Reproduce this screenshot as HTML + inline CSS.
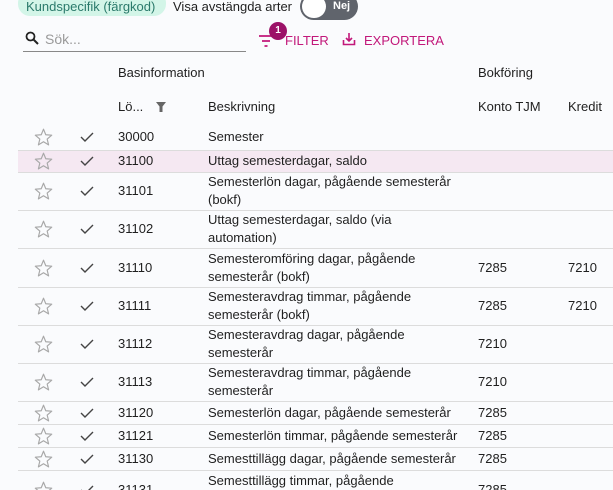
<!DOCTYPE html>
<html><head><meta charset="utf-8"><style>
*{margin:0;padding:0;box-sizing:border-box}
html,body{width:613px;height:490px;overflow:hidden}
body{background:#fafbfd;font-family:"Liberation Sans",sans-serif;font-size:13px;color:#1f1f1f;position:relative}
.a{position:absolute;white-space:nowrap}
.row{position:absolute;left:18px;right:0;border-bottom:1px solid #dcdcdc}
.st{position:absolute;left:34px}
.ck{position:absolute;left:79px}
.t{position:absolute;line-height:18px}
</style></head><body>
<div class="a" style="left:18px;top:-9px;width:148px;height:25px;border-radius:12px;background:#d3f5e8;color:#2b7a6b;font-size:13px;padding:8px 0 0 8px;line-height:15px">Kundspecifik (färgkod)</div>
<div class="a" style="left:173px;top:-1px;font-size:13px">Visa avstängda arter</div>
<div class="a" style="left:300px;top:-7px;width:58px;height:27px;border-radius:14px;background:#60646c"></div>
<div class="a" style="left:302px;top:-5px;width:24px;height:23px;border-radius:12px;background:#fff"></div>
<div class="a" style="left:333px;top:0px;color:#fff;font-size:11px;font-weight:bold">Nej</div>
<svg class="a" style="left:25px;top:31px" width="14" height="14" viewBox="0 0 14 14"><circle cx="5.5" cy="5.5" r="4" fill="none" stroke="#222" stroke-width="1.8"/><path d="M8.5 8.5L13 13" stroke="#222" stroke-width="2"/></svg>
<div class="a" style="left:45px;top:31px;color:#9a9a9a;font-size:14px">Sök...</div>
<div class="a" style="left:23px;top:51px;width:223px;height:1px;background:#888"></div>
<svg class="a" style="left:258px;top:34px" width="16" height="14" viewBox="0 0 16 14"><path d="M1 2H15M4 7H12M6.5 12H9.5" stroke="#c2187a" stroke-width="1.8"/></svg>
<div class="a" style="left:269px;top:22px;width:18px;height:18px;border-radius:9px;background:#9c1268;color:#fff;font-size:10px;font-weight:bold;text-align:center;line-height:18px">1</div>
<div class="a" style="left:285px;top:33px;color:#c2187a;font-size:13px">FILTER</div>
<svg class="a" style="left:342px;top:32px" width="14" height="14" viewBox="0 0 14 14"><path d="M7 1V9M4 6L7 9L10 6M1.5 8V12.5H12.5V8" fill="none" stroke="#c2187a" stroke-width="1.6"/></svg>
<div class="a" style="left:364px;top:33px;color:#c2187a;font-size:13px">EXPORTERA</div>
<div class="a" style="left:118px;top:65px">Basinformation</div>
<div class="a" style="left:478px;top:65px">Bokföring</div>
<div class="a" style="left:118px;top:99px">Lö...</div>
<svg class="a" style="left:155px;top:101px" width="12" height="12" viewBox="0 0 12 12"><path d="M1 1H11L7.5 5.5V11H4.5V5.5Z" fill="#666"/></svg>
<div class="a" style="left:208px;top:99px">Beskrivning</div>
<div class="a" style="left:478px;top:99px">Konto TJM</div>
<div class="a" style="left:568px;top:99px">Kredit</div>

<div class="row" style="top:124px;height:27px"></div>
<div class="row" style="top:151px;height:22px;background:#f5e8f2"></div>
<div class="row" style="top:173px;height:38px"></div>
<div class="row" style="top:211px;height:38px"></div>
<div class="row" style="top:249px;height:39px"></div>
<div class="row" style="top:288px;height:38px"></div>
<div class="row" style="top:326px;height:38px"></div>
<div class="row" style="top:364px;height:38px"></div>
<div class="row" style="top:402px;height:23px"></div>
<div class="row" style="top:425px;height:23px"></div>
<div class="row" style="top:448px;height:23px"></div>

<div id="c"></div>
<script>
const R=[[137,"30000","Semester","",""],[161,"31100","Uttag semesterdagar, saldo","",""],[191,"31101","Semesterlön dagar, pågående semesterår<br>(bokf)","",""],[229,"31102","Uttag semesterdagar, saldo (via<br>automation)","",""],[268,"31110","Semesteromföring dagar, pågående<br>semesterår (bokf)","7285","7210"],[306,"31111","Semesteravdrag timmar, pågående<br>semesterår (bokf)","7285","7210"],[344,"31112","Semesteravdrag dagar, pågående<br>semesterår","7210",""],[382,"31113","Semesteravdrag timmar, pågående<br>semesterår","7210",""],[413,"31120","Semesterlön dagar, pågående semesterår","7285",""],[436,"31121","Semesterlön timmar, pågående semesterår","7285",""],[459,"31130","Semesttillägg dagar, pågående semesterår","7285",""],[490,"31131","Semesttillägg timmar, pågående<br>semesterår","7285",""]];
let h="";
for(const [y,c,d,k,kr] of R){
 const two=d.includes("<br>");
 h+=`<svg class="st" style="top:${y-9}px" width="19" height="18" viewBox="0 0 24 23"><path d="M12 1.5L14.9 8.6L22.5 9.2L16.7 14.2L18.5 21.6L12 17.6L5.5 21.6L7.3 14.2L1.5 9.2L9.1 8.6Z" fill="none" stroke="#a8a8a8" stroke-width="1.5" stroke-linejoin="round"/></svg>`;
 h+=`<svg class="ck" style="top:${y-6}px" width="16" height="12" viewBox="0 0 16 12"><path d="M2 6L6 10L14 2" fill="none" stroke="#444" stroke-width="1.4"/></svg>`;
 h+=`<div class="t" style="left:118px;top:${y-9}px">${c}</div>`;
 h+=`<div class="t" style="left:208px;top:${y-(two?18:9)}px">${d}</div>`;
 if(k)h+=`<div class="t" style="left:478px;top:${y-9}px">${k}</div>`;
 if(kr)h+=`<div class="t" style="left:568px;top:${y-9}px">${kr}</div>`;
}
document.getElementById("c").innerHTML=h;
</script>
</body></html>
